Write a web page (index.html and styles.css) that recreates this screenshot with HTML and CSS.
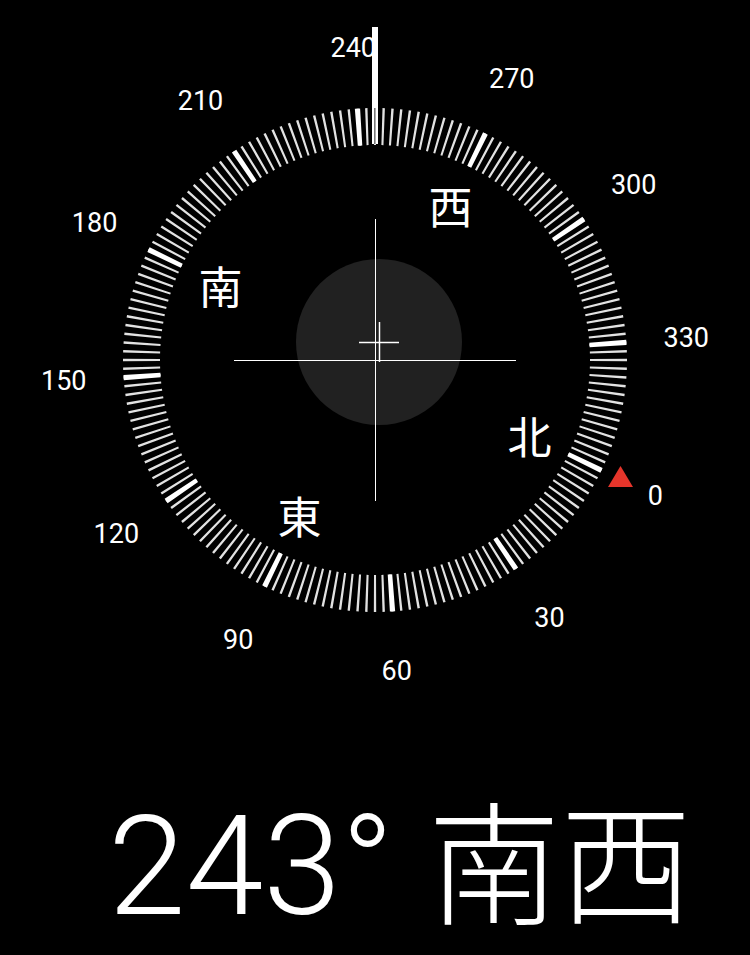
FILE: index.html
```html
<!DOCTYPE html>
<html lang="ja">
<head>
  <meta charset="UTF-8" />
  <meta name="viewport" content="width=device-width, initial-scale=1" />
  <title>コンパス</title>
  <link rel="stylesheet" href="styles.css">
</head>
<body>
  <div class="compass">
    <svg class="dial" width="750" height="762" viewBox="0 0 750 762">
      <!-- 2° marks -->
      <circle cx="375" cy="360" r="233.5" fill="none" stroke="#e2e2e2" stroke-width="37"
              pathLength="360" stroke-dasharray="0.55 1.45" transform="rotate(-0.275 375 360)" />
      <!-- 30° marks -->
      <circle cx="375" cy="360" r="233.5" fill="none" stroke="#fff" stroke-width="37"
              pathLength="360" stroke-dasharray="1.2 28.8" transform="rotate(25.4 375 360)" />

      <!-- level bubble -->
      <circle cx="379" cy="342" r="83" fill="#212121" />
      <line x1="375.5" y1="219" x2="375.5" y2="501" stroke="#fff" stroke-width="1" />
      <line x1="234" y1="360.5" x2="516" y2="360.5" stroke="#fff" stroke-width="1" />
      <line x1="359" y1="342.5" x2="399" y2="342.5" stroke="#fff" stroke-width="1.5" />
      <line x1="379.5" y1="322" x2="379.5" y2="362" stroke="#fff" stroke-width="1.5" />

      <!-- heading line -->
      <rect x="372" y="27" width="6" height="117" fill="#fff" />
      <rect x="374" y="108" width="1.6" height="36" fill="#777" />

      <!-- north marker -->
      <polygon points="608,487 633,487 620.5,466" fill="#e5352b" />
    </svg>

    <span class="deg" style="--a:116deg">0</span>
    <span class="deg" style="--a:146deg">30</span>
    <span class="deg" style="--a:176deg">60</span>
    <span class="deg" style="--a:206deg">90</span>
    <span class="deg" style="--a:236deg">120</span>
    <span class="deg" style="--a:266deg">150</span>
    <span class="deg" style="--a:296deg">180</span>
    <span class="deg" style="--a:326deg">210</span>
    <span class="deg" style="--a:356deg">240</span>
    <span class="deg" style="--a:26deg">270</span>
    <span class="deg" style="--a:56deg">300</span>
    <span class="deg" style="--a:86deg">330</span>

    <span class="cardinal" style="--a:116deg">北</span>
    <span class="cardinal" style="--a:206deg">東</span>
    <span class="cardinal" style="--a:296deg">南</span>
    <span class="cardinal" style="--a:26deg">西</span>
  </div>

  <div class="readout">
    <span class="heading">243°</span>
    <span class="direction">南西</span>
  </div>
</body>
</html>
```

FILE: styles.css
```css
html, body {
  margin: 0;
  background: #000;
  color: #fff;
}
body {
  width: 750px;
  height: 955px;
  overflow: hidden;
  font-family: Roboto, "Noto Sans CJK JP", sans-serif;
}
.compass {
  position: relative;
  width: 750px;
  height: 762px;
}
.dial {
  position: absolute;
  top: 0;
  left: 0;
}
/* labels sit on circles round the dial centre, kept upright */
.deg, .cardinal {
  position: absolute;
  left: 375px;
  top: 360px;
  line-height: 1;
  white-space: nowrap;
  transform: translate(-50%, -50%) rotate(var(--a)) translateY(var(--r)) rotate(calc(-1 * var(--a)));
}
.deg {
  --r: -312px;
  font-size: 27px;
  font-weight: 400;
}
.cardinal {
  --r: -172px;
  font-family: "Noto Sans CJK JP", sans-serif;
  font-size: 44px;
  font-weight: 400;
}
.readout {
  display: flex;
  align-items: baseline;
  gap: 34px;
  padding-left: 108px;
  line-height: 190px;
}
.heading {
  font-size: 140px;
  font-weight: 300;
}
.direction {
  font-family: "Noto Sans CJK JP", sans-serif;
  font-size: 132px;
  font-weight: 300;
}
```
